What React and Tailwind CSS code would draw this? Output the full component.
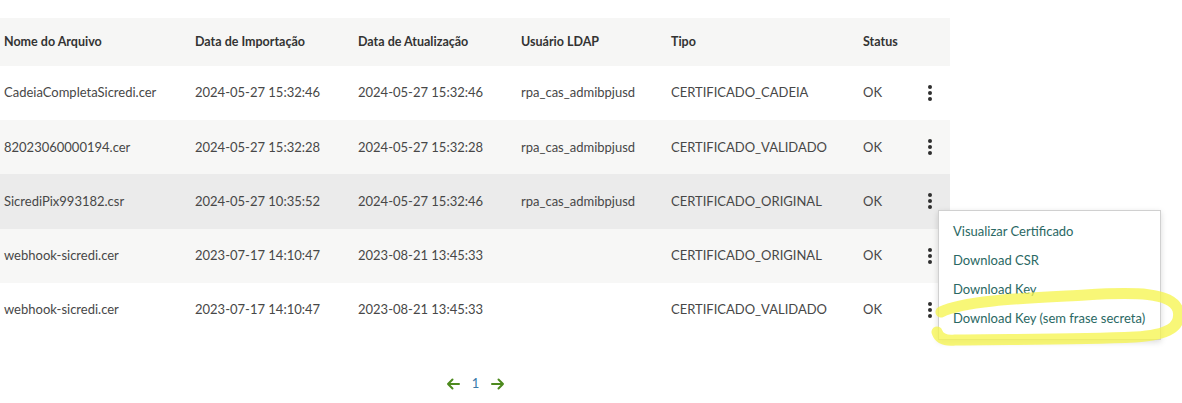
import React from 'react';

const rows = [
  { name: 'CadeiaCompletaSicredi.cer', imp: '2024-05-27 15:32:46', upd: '2024-05-27 15:32:46', user: 'rpa_cas_admibpjusd', tipo: 'CERTIFICADO_CADEIA', bg: 'bg-white' },
  { name: '82023060000194.cer', imp: '2024-05-27 15:32:28', upd: '2024-05-27 15:32:28', user: 'rpa_cas_admibpjusd', tipo: 'CERTIFICADO_VALIDADO', bg: 'bg-[#f7f7f6]' },
  { name: 'SicrediPix993182.csr', imp: '2024-05-27 10:35:52', upd: '2024-05-27 15:32:46', user: 'rpa_cas_admibpjusd', tipo: 'CERTIFICADO_ORIGINAL', bg: 'bg-[#ebebeb]' },
  { name: 'webhook-sicredi.cer', imp: '2023-07-17 14:10:47', upd: '2023-08-21 13:45:33', user: '', tipo: 'CERTIFICADO_ORIGINAL', bg: 'bg-[#f7f7f6]' },
  { name: 'webhook-sicredi.cer', imp: '2023-07-17 14:10:47', upd: '2023-08-21 13:45:33', user: '', tipo: 'CERTIFICADO_VALIDADO', bg: 'bg-white' },
];

const cols = 'grid grid-cols-[191px_163px_163px_150px_192px_55px_1fr] items-center';

function Kebab() {
  return (
    <div className="flex flex-col items-center gap-[2px]">
      <span className="h-[4px] w-[4px] rounded-full bg-[#2f2f2f]" />
      <span className="h-[4px] w-[4px] rounded-full bg-[#2f2f2f]" />
      <span className="h-[4px] w-[4px] rounded-full bg-[#2f2f2f]" />
    </div>
  );
}

function Arrow({ left }) {
  return (
    <svg width="14" height="12" viewBox="0 0 14 12" fill="none" stroke="#4d8a1e" strokeWidth="2" strokeLinecap="round" strokeLinejoin="round">
      {left ? (
        <path d="M13 6H2M6.5 1.5 2 6l4.5 4.5" />
      ) : (
        <path d="M1 6h11M7.5 1.5 12 6l-4.5 4.5" />
      )}
    </svg>
  );
}

export default function App() {
  return (
    <div className="relative h-[403px] w-[1182px] overflow-hidden bg-white pt-[18px] text-[13px] text-[#474747]" style={{ fontFamily: 'Lato, "Liberation Sans", sans-serif' }}>
      <div className="w-[950px]">
        <div className={`${cols} h-[48px] bg-[#f6f6f5] pl-[4px] text-[12.5px] font-bold text-[#333]`}>
          <div>Nome do Arquivo</div>
          <div>Data de Importação</div>
          <div>Data de Atualização</div>
          <div>Usuário LDAP</div>
          <div>Tipo</div>
          <div>Status</div>
          <div />
        </div>
        {rows.map((r, i) => (
          <div key={i} className={`${cols} h-[54.2px] pl-[4px] ${r.bg}`}>
            <div>{r.name}</div>
            <div>{r.imp}</div>
            <div>{r.upd}</div>
            <div>{r.user}</div>
            <div>{r.tipo}</div>
            <div>OK</div>
            <div className="flex justify-start pl-[10px]">
              <Kebab />
            </div>
          </div>
        ))}
        <div className="flex h-[94px] items-center justify-center gap-[12px] pl-[1px]">
          <Arrow left />
          <span className="text-[13px] text-[#3a7aa8]">1</span>
          <Arrow />
        </div>
      </div>

      {/* action menu */}
      <div className="absolute left-[938px] top-[210px] w-[223px] border border-[#d0d0d0] bg-white py-[6px] shadow-[0_2px_6px_rgba(0,0,0,0.15)]">
        {['Visualizar Certificado', 'Download CSR', 'Download Key', 'Download Key (sem frase secreta)'].map((t) => (
          <div key={t} className="flex h-[29px] items-center px-[14px] text-[13px] text-[#2a6863]">
            {t}
          </div>
        ))}
      </div>

      {/* highlighter annotation */}
      <svg className="pointer-events-none absolute left-0 top-0" width="1182" height="403">
        <path
          d="M941 312 C 965 300, 1030 298, 1085 295 C 1135 292, 1172 292, 1178 310 C 1182 327, 1168 335, 1135 337 C 1075 340, 1000 339, 955 340 C 945 341, 939 338, 937 332"
          fill="none"
          stroke="#f6f44a"
          strokeOpacity="0.75"
          strokeWidth="11"
          strokeLinecap="round"
        />
      </svg>
    </div>
  );
}
